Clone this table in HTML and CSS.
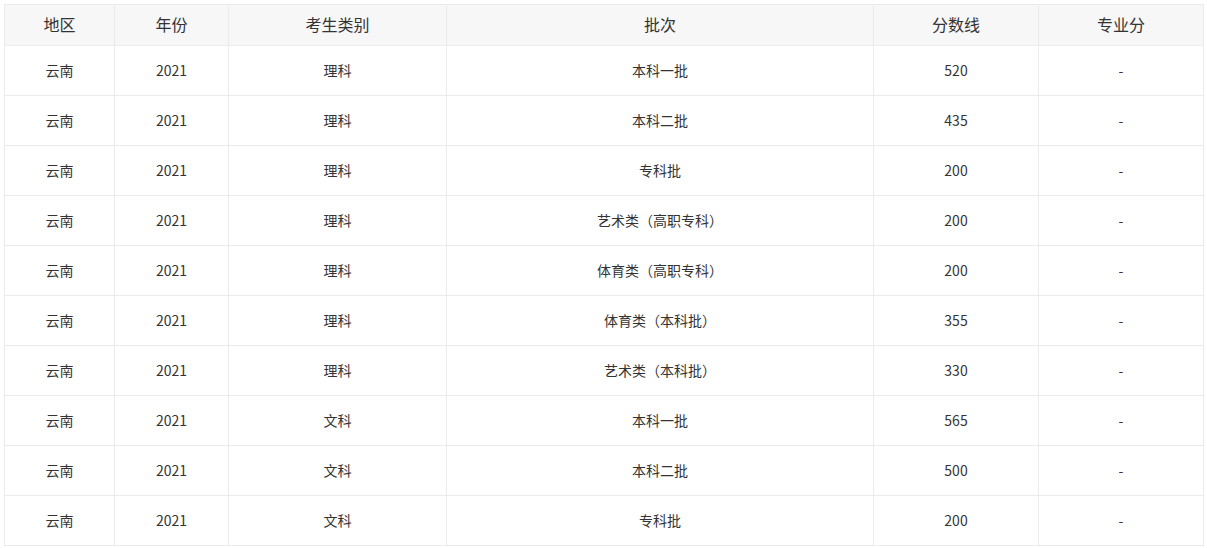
FILE: index.html
```html
<!DOCTYPE html>
<html lang="zh-CN">
<head>
<meta charset="utf-8">
<title>分数线</title>
<link rel="stylesheet" href="styles.css">
</head>
<body>
<table class="score-table">
  <colgroup>
    <col class="c1"><col class="c2"><col class="c3"><col class="c4"><col class="c5"><col class="c6">
  </colgroup>
  <thead>
    <tr><th>地区</th><th>年份</th><th>考生类别</th><th>批次</th><th>分数线</th><th>专业分</th></tr>
  </thead>
  <tbody>
    <tr><td>云南</td><td>2021</td><td>理科</td><td>本科一批</td><td>520</td><td>-</td></tr>
    <tr><td>云南</td><td>2021</td><td>理科</td><td>本科二批</td><td>435</td><td>-</td></tr>
    <tr><td>云南</td><td>2021</td><td>理科</td><td>专科批</td><td>200</td><td>-</td></tr>
    <tr><td>云南</td><td>2021</td><td>理科</td><td>艺术类（高职专科）</td><td>200</td><td>-</td></tr>
    <tr><td>云南</td><td>2021</td><td>理科</td><td>体育类（高职专科）</td><td>200</td><td>-</td></tr>
    <tr><td>云南</td><td>2021</td><td>理科</td><td>体育类（本科批）</td><td>355</td><td>-</td></tr>
    <tr><td>云南</td><td>2021</td><td>理科</td><td>艺术类（本科批）</td><td>330</td><td>-</td></tr>
    <tr><td>云南</td><td>2021</td><td>文科</td><td>本科一批</td><td>565</td><td>-</td></tr>
    <tr><td>云南</td><td>2021</td><td>文科</td><td>本科二批</td><td>500</td><td>-</td></tr>
    <tr><td>云南</td><td>2021</td><td>文科</td><td>专科批</td><td>200</td><td>-</td></tr>
  </tbody>
</table>
</body>
</html>
```
FILE: styles.css
```css
html, body {
  margin: 0;
  padding: 0;
  background: #ffffff;
}
body {
  padding: 4px 0 0 4px;
  font-family: "Noto Sans CJK SC", "Noto Sans", sans-serif;
  color: #333333;
}
.score-table {
  border-collapse: collapse;
  table-layout: fixed;
  width: 1200px;
}
.c1 { width: 110px; }
.c2 { width: 114px; }
.c3 { width: 218px; }
.c4 { width: 427px; }
.c5 { width: 165px; }
.c6 { width: 165px; }
.score-table th,
.score-table td {
  border: 1px solid #ebebeb;
  text-align: center;
  padding: 0 0 2px 0;
  font-weight: normal;
  vertical-align: middle;
}
.score-table th {
  height: 38px;
  background: #f7f7f7;
  font-size: 16px;
  line-height: 20px;
}
.score-table td {
  height: 47px;
  font-size: 14px;
  line-height: 20px;
}
```
